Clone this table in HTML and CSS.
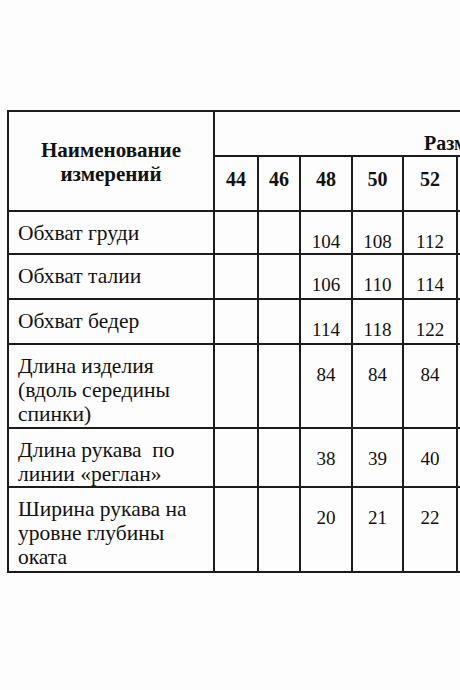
FILE: index.html
```html
<!DOCTYPE html>
<html lang="ru">
<head>
<meta charset="utf-8">
<title>Таблица размеров</title>
<link rel="stylesheet" href="styles.css">
</head>
<body>
<table class="sizes">
  <colgroup>
    <col class="c-name">
    <col class="c-44">
    <col class="c-46">
    <col class="c-48">
    <col class="c-50">
    <col class="c-52">
    <col class="c-54">
  </colgroup>
  <thead>
    <tr class="h-top">
      <th class="name-head" rowspan="2">Наименование<br>измерений</th>
      <th class="size-title" colspan="6">Размеры</th>
    </tr>
    <tr class="h-sizes">
      <th class="size">44</th>
      <th class="size">46</th>
      <th class="size">48</th>
      <th class="size">50</th>
      <th class="size">52</th>
      <th class="size"></th>
    </tr>
  </thead>
  <tbody>
    <tr class="r-short">
      <td class="label">Обхват груди</td>
      <td class="val"></td><td class="val"></td>
      <td class="val">104</td><td class="val">108</td><td class="val">112</td><td class="val"></td>
    </tr>
    <tr class="r-mid">
      <td class="label">Обхват талии</td>
      <td class="val"></td><td class="val"></td>
      <td class="val">106</td><td class="val">110</td><td class="val">114</td><td class="val"></td>
    </tr>
    <tr class="r-mid">
      <td class="label">Обхват бедер</td>
      <td class="val"></td><td class="val"></td>
      <td class="val">114</td><td class="val">118</td><td class="val">122</td><td class="val"></td>
    </tr>
    <tr class="r-tall">
      <td class="label">Длина изделия<br>(вдоль середины<br>спинки)</td>
      <td class="val"></td><td class="val"></td>
      <td class="val">84</td><td class="val">84</td><td class="val">84</td><td class="val"></td>
    </tr>
    <tr class="r-two">
      <td class="label">Длина рукава&nbsp; по<br>линии «реглан»</td>
      <td class="val"></td><td class="val"></td>
      <td class="val">38</td><td class="val">39</td><td class="val">40</td><td class="val"></td>
    </tr>
    <tr class="r-last">
      <td class="label">Ширина рукава на<br>уровне глубины<br>оката</td>
      <td class="val"></td><td class="val"></td>
      <td class="val">20</td><td class="val">21</td><td class="val">22</td><td class="val"></td>
    </tr>
  </tbody>
</table>
</body>
</html>
```

FILE: styles.css
```css
html, body {
  margin: 0;
  padding: 0;
  overflow: hidden;
  background: #fdfdfd;
}

body {
  width: 460px;
  height: 690px;
  font-family: "Liberation Serif", "Times New Roman", serif;
  color: #111;
}

.sizes {
  margin: 110px 0 0 7px;
  border-collapse: collapse;
  table-layout: fixed;
  width: 560px;
  font-size: 20px;
  line-height: 24px;
}

.c-name { width: 206px; }
.c-44 { width: 44px; }
.c-46 { width: 42px; }
.c-48 { width: 52px; }
.c-50 { width: 51px; }
.c-52 { width: 54px; }
.c-54 { width: 111px; }

.sizes th,
.sizes td {
  border: 2px solid #1c1c1c;
  padding: 0;
  vertical-align: top;
}

.h-top { height: 45px; }
.h-sizes { height: 55px; }
.r-short { height: 43px; }
.r-mid { height: 45px; }
.r-tall { height: 84px; }
.r-two { height: 59px; }
.r-last { height: 85px; }

.sizes .name-head {
  font-size: 21px;
  font-weight: bold;
  text-align: center;
  vertical-align: middle;
  padding-top: 2px;
}

.sizes .size-title {
  font-weight: bold;
  text-align: left;
  padding: 19px 0 0 209px;
  white-space: nowrap;
}

.sizes .size {
  font-weight: bold;
  text-align: center;
  padding-top: 10px;
}

.sizes .label {
  font-size: 21.5px;
  padding: 9px 4px 0 9px;
  text-align: left;
  white-space: nowrap;
}

.sizes .val {
  font-size: 19px;
  line-height: 22px;
  text-align: center;
  padding-top: 19px;
}
```
